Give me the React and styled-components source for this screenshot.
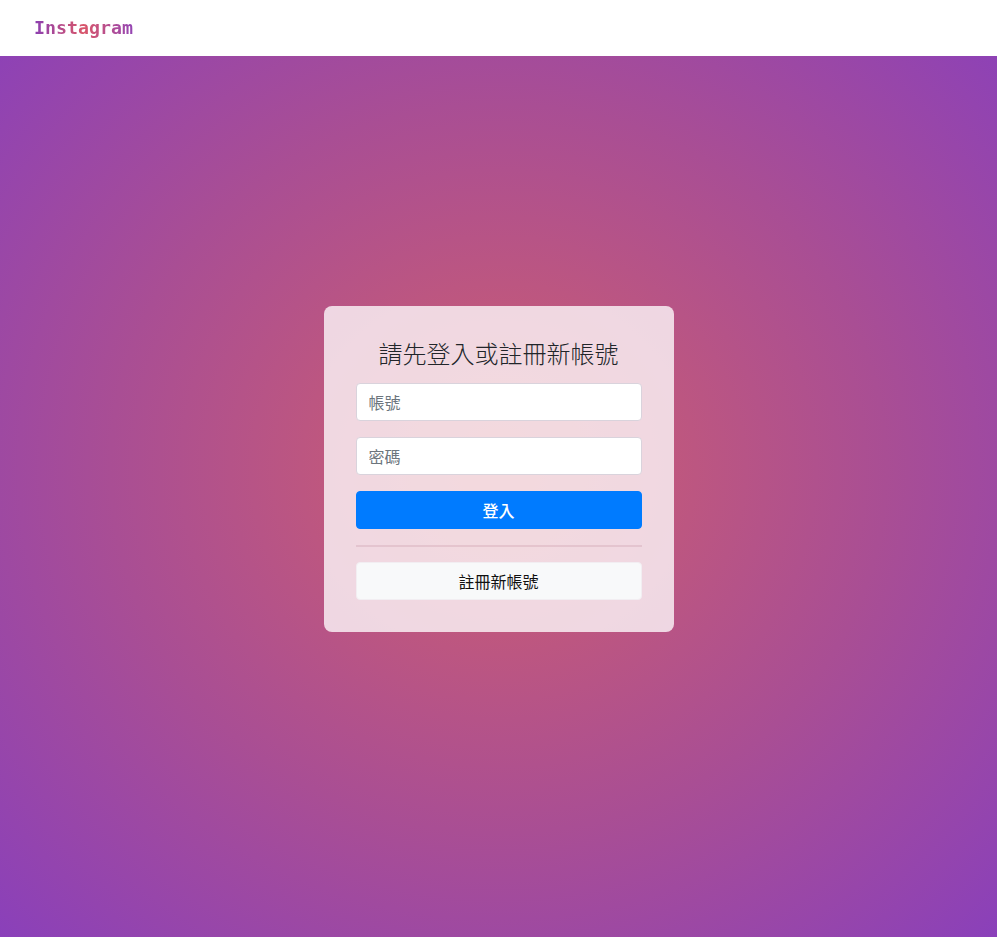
import React, { useState } from 'react';
import styled, { createGlobalStyle } from 'styled-components';

const GlobalStyle = createGlobalStyle`
  html, body {
    margin: 0;
    padding: 0;
    height: 100%;
  }
  body {
    font-family: "Noto Sans CJK TC", "Noto Sans", sans-serif;
  }
  #root {
    min-height: 100%;
  }
`;

export default function App() {
  const [account, setAccount] = useState('');
  const [password, setPassword] = useState('');

  return (
    <>
      <GlobalStyle />
      <Page>
        <Header>
          <Brand>Instagram</Brand>
        </Header>
        <Card>
          <Title>請先登入或註冊新帳號</Title>
          <Input
            type="text"
            placeholder="帳號"
            value={account}
            onChange={(e) => setAccount(e.target.value)}
          />
          <Input
            type="password"
            placeholder="密碼"
            value={password}
            onChange={(e) => setPassword(e.target.value)}
          />
          <Button $variant="primary">登入</Button>
          <Divider />
          <Button $variant="light">註冊新帳號</Button>
        </Card>
      </Page>
    </>
  );
}

// full-viewport gradient; the card is centred on the whole window, header sits on top
const Page = styled.div`
  display: flex;
  align-items: center;
  justify-content: center;
  min-height: 100vh;
  background: radial-gradient(ellipse farthest-corner at 50% 50%, #cc5c70 0%, #c3597a 18%, #a94e94 55%, #8a40ba 100%);
`;

const Header = styled.header`
  position: fixed;
  top: 0;
  left: 0;
  right: 0;
  display: flex;
  align-items: center;
  height: 56px;
  padding: 0 34px;
  background: #fff;
  box-sizing: border-box;
`;

const Brand = styled.span`
  font-family: "DejaVu Sans Mono", "Liberation Mono", monospace;
  font-size: 18.3px;
  font-weight: bold;
  background: linear-gradient(90deg, #8b3fb2 0%, #d9566a 50%, #9446b4 100%);
  -webkit-background-clip: text;
  background-clip: text;
  color: transparent;
  margin-top: -2px;
`;

const Card = styled.div`
  display: flex;
  flex-direction: column;
  width: 350px;
  padding: 32px;
  box-sizing: border-box;
  background: rgba(255, 255, 255, 0.77);
  border-radius: 8px;
`;

const Title = styled.h1`
  margin: 0 0 16px;
  font-size: 24px;
  font-weight: 300;
  line-height: 29px;
  text-align: center;
  color: #212529;
`;

const Input = styled.input`
  height: 38px;
  padding: 6px 12px;
  margin-bottom: 16px;
  box-sizing: border-box;
  border: 1px solid #d9d3dc;
  border-radius: 4px;
  background: #fff;
  font-family: inherit;
  font-size: 16px;
  color: #495057;
  outline: none;

  &::placeholder {
    color: #6c757d;
  }
`;

const Button = styled.button`
  height: 38px;
  border-radius: 4px;
  font-family: inherit;
  font-size: 16px;
  font-weight: ${(p) => (p.$variant === 'primary' ? 500 : 400)};
  cursor: pointer;
  border: 1px solid ${(p) => (p.$variant === 'primary' ? '#007bff' : '#f2eef2')};
  background: ${(p) => (p.$variant === 'primary' ? '#007bff' : '#f8f9fa')};
  color: ${(p) => (p.$variant === 'primary' ? '#fff' : '#111')};
`;

const Divider = styled.hr`
  width: 100%;
  margin: 16px 0 15px;
  border: 0;
  border-top: 2px solid rgba(200, 150, 165, 0.3);
`;
